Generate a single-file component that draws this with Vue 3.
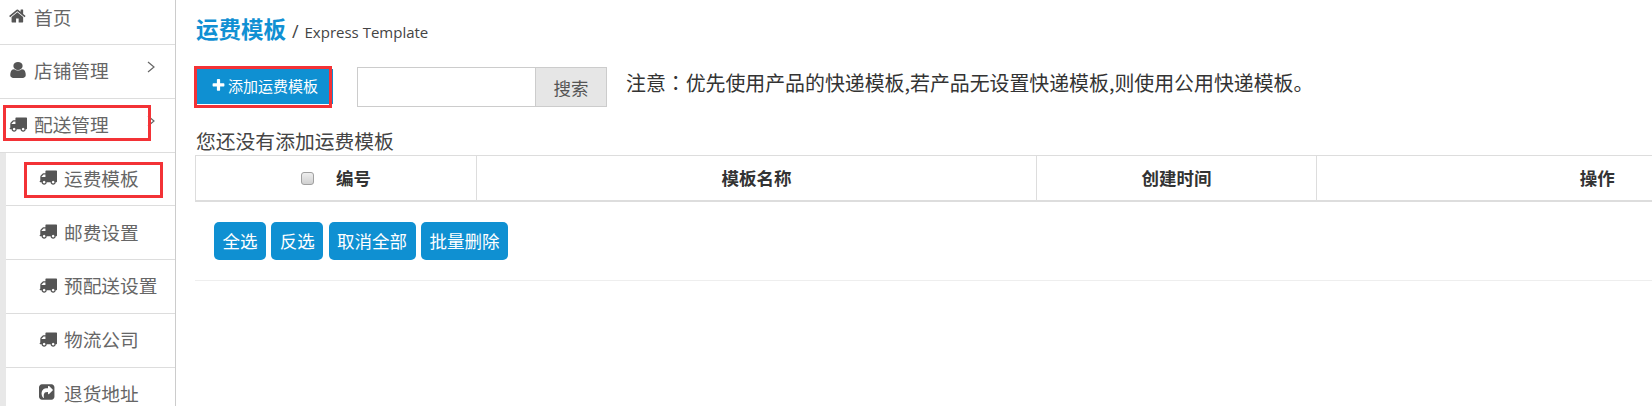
<script setup>
const icons = {
  home: 'M1408 992v480q0 26-19 45t-45 19h-384v-384h-256v384h-384q-26 0-45-19t-19-45v-480q0-1 .5-3t.5-3l575-474 575 474q1 2 1 6zm223-69l-62 74q-8 9-21 11h-3q-13 0-21-7l-692-577-692 577q-12 8-24 7-13-2-21-11l-62-74q-8-10-7-23.500t11-21.500l719-599q32-26 76-26t76 26l244 204v-195q0-14 9-23t23-9h192q14 0 23 9t9 23v408l219 182q10 8 11 21.500t-7 23.500z',
  user: 'M1536 1399q0 109-62.500 187t-150.500 78h-854q-88 0-150.500-78t-62.500-187q0-85 8.500-160.500t31.500-152 58.500-131 94-89 134.500-34.500q131 128 313 128t313-128q76 0 134.500 34.500t94 89 58.500 131 31.500 152 8.500 160.500zm-256-887q0 159-112.500 271.500t-271.500 112.500-271.500-112.500-112.500-271.500 112.500-271.500 271.500-112.500 271.500 112.500 112.500 271.500z',
  truck: 'M640 1408q0-52-38-90t-90-38-90 38-38 90 38 90 90 38 90-38 38-90zm-384-512h384v-256h-158q-13 0-22 9l-195 195q-9 9-9 22v30zm1280 512q0-52-38-90t-90-38-90 38-38 90 38 90 90 38 90-38 38-90zm256-1088v1024q0 15-4 26.500t-13.500 18.500-16.500 11.500-23.500 6-22.500 2-25.500 0-22.500-.5q0 106-75 181t-181 75-181-75-75-181h-384q0 106-75 181t-181 75-181-75-75-181h-64q-3 0-22.500.5t-25.500 0-22.500-2-23.500-6-16.500-11.500-13.500-18.500-4-26.500q0-26 19-45t45-19v-320q0-8-.5-35t0-38 2.500-34.500 6.500-37 14-30.500 22.500-30l198-198q19-19 50.500-32t58.500-13h160v-192q0-26 19-45t45-19h1024q26 0 45 19t19 45z',
  share: 'M1005 1101l352-352q19-19 19-45t-19-45l-352-352q-30-31-69-14-40 17-40 59v160q-119 0-216 19.500t-162.500 51-114 79-76.500 95.500-44.500 109-21.500 111.500-5 110.500q0 181 167 404 11 12 25 12 7 0 13-3 22-9 19-33-44-354 62-473 46-52 130-75.500t224-23.500v160q0 42 40 59 12 5 24 5 26 0 45-19zm531-685v960q0 119-84.500 203.500t-203.500 84.500h-960q-119 0-203.500-84.500t-84.500-203.500v-960q0-119 84.500-203.500t203.500-84.500h960q119 0 203.500 84.500t84.500 203.500z',
  plus: 'M1600 736v192q0 40-28 68t-68 28h-416v416q0 40-28 68t-68 28h-192q-40 0-68-28t-28-68v-416h-416q-40 0-68-28t-28-68v-192q0-40 28-68t68-28h416v-416q0-40 28-68t68-28h192q40 0 68 28t28 68v416h416q40 0 68 28t28 68z',
}

// the user glyph sits wider in the reference than its usual proportions
const boxes = { user: '150 40 1492 1728' }

const topItems = [
  { label: '首页', icon: 'home' },
  { label: '店铺管理', icon: 'user', arrow: true },
  { label: '配送管理', icon: 'truck', arrow: true, marked: true },
]

const subItems = [
  { label: '运费模板', icon: 'truck', marked: true },
  { label: '邮费设置', icon: 'truck' },
  { label: '预配送设置', icon: 'truck' },
  { label: '物流公司', icon: 'truck' },
  { label: '退货地址', icon: 'share' },
]

const actions = ['全选', '反选', '取消全部', '批量删除']
</script>

<template>
  <div class="page">
    <aside class="sidebar">
      <ul class="menu">
        <li v-for="item in topItems" :key="item.label" class="menu-item">
          <svg class="icon" :viewBox="boxes[item.icon] || '0 0 1792 1792'" preserveAspectRatio="none"><path :d="icons[item.icon]" /></svg>
          <span>{{ item.label }}</span>
          <svg v-if="item.arrow" class="arrow" viewBox="0 0 8 12"><path d="M1 1l6 5-6 5" /></svg>
          <i v-if="item.marked" class="mark mark-top"></i>
        </li>
      </ul>
      <ul class="submenu">
        <li v-for="item in subItems" :key="item.label" class="menu-item sub-item">
          <svg class="icon" viewBox="0 0 1792 1792"><path :d="icons[item.icon]" /></svg>
          <span>{{ item.label }}</span>
          <i v-if="item.marked" class="mark mark-sub"></i>
        </li>
      </ul>
    </aside>

    <main class="main">
      <h1 class="heading">
        <span class="heading-title">运费模板</span>
        <span class="heading-sub"><span class="slash">/</span> Express Template</span>
      </h1>

      <div class="toolbar">
        <div class="add-wrap">
          <button class="add-btn" type="button">
            <svg viewBox="0 0 1792 1792"><path :d="icons.plus" /></svg>
            添加运费模板
          </button>
          <i class="mark mark-add"></i>
        </div>
        <div class="search">
          <input class="search-input" type="text" />
          <button class="search-btn" type="button">搜索</button>
        </div>
        <p class="note">注意<span class="colon">：</span>优先使用产品的快递模板,若产品无设置快递模板,则使用公用快递模板。</p>
      </div>

      <p class="empty">您还没有添加运费模板</p>

      <table class="grid">
        <colgroup>
          <col class="col-a" />
          <col class="col-b" />
          <col class="col-c" />
          <col class="col-d" />
        </colgroup>
        <thead>
          <tr>
            <th><input class="check" type="checkbox" />编号</th>
            <th>模板名称</th>
            <th>创建时间</th>
            <th>操作</th>
          </tr>
        </thead>
      </table>

      <div class="actions">
        <button v-for="label in actions" :key="label" class="action-btn" type="button">{{ label }}</button>
      </div>
    </main>
  </div>
</template>

<style>
html,
body {
  margin: 0;
  overflow: hidden;
  background: #fff;
}
</style>

<style scoped>
.page {
  display: flex;
  width: 1652px;
  height: 406px;
  overflow: hidden;
  font-family: "Noto Sans CJK SC", "Liberation Sans", sans-serif;
  color: #333;
}

.sidebar {
  flex: none;
  width: 175px;
  border-right: 1px solid #ccc;
}

.menu,
.submenu {
  list-style: none;
  margin: 0;
  padding: 0;
}

.menu {
  margin-top: -8.75px;
}

.submenu {
  border-left: 6px solid #e8e8e8;
}

.menu-item {
  position: relative;
  display: flex;
  align-items: center;
  box-sizing: border-box;
  height: 53.75px;
  padding: 0 0 3px 9px;
  border-bottom: 1px solid #ddd;
  font-size: 18.7px;
  color: #666;
}

.sub-item {
  padding-left: 33px;
}

.icon {
  flex: none;
  width: 18px;
  height: 18px;
  margin-right: 7px;
  fill: #555;
}

.arrow {
  position: absolute;
  right: 20px;
  top: 16px;
  width: 8px;
  height: 12px;
  fill: none;
  stroke: #666;
  stroke-width: 1.2;
}

.mark {
  position: absolute;
  box-sizing: border-box;
  border: 3px solid #f33236;
  pointer-events: none;
}

.mark-top {
  left: 3px;
  top: 6px;
  width: 148px;
  height: 36px;
}

.mark-sub {
  left: 18px;
  top: 9px;
  width: 139px;
  height: 36px;
}

.mark-add {
  left: -3px;
  top: -3px;
  width: 138px;
  height: 42px;
}

.main {
  flex: 1;
  min-width: 0;
  padding-left: 19px;
  overflow: hidden;
}

.heading {
  display: flex;
  align-items: baseline;
  gap: 6px;
  height: 36px;
  margin: 10px 0 0 1px;
  font-weight: 400;
  line-height: 36px;
}

.heading-title {
  font-size: 22.5px;
  font-weight: 700;
  color: #1090d3;
}

.heading-sub {
  margin-top: -1px;
  font-family: "Open Sans", sans-serif;
  font-size: 15px;
  color: #444;
}

.slash {
  margin-right: 2px;
  font-size: 18px;
}

.toolbar {
  display: flex;
  align-items: flex-start;
  margin: 23px 0 0 2px;
}

.add-wrap {
  position: relative;
  flex: none;
}

.add-btn {
  display: flex;
  align-items: center;
  justify-content: center;
  gap: 2px;
  width: 136px;
  height: 35px;
  padding: 0 1px 2px 0;
  border: 0;
  background: #0f90d2;
  color: #fff;
  font: inherit;
  font-size: 15px;
}

.add-btn svg {
  width: 15px;
  height: 15px;
  fill: #fff;
}

.search {
  display: flex;
  flex: none;
  width: 250px;
  height: 40px;
  margin: -2px 0 0 24px;
}

.search-input {
  flex: 1;
  min-width: 0;
  box-sizing: border-box;
  border: 1px solid #ccc;
  border-right: 0;
  background: #fff;
  padding: 0;
}

.search-btn {
  flex: none;
  width: 72px;
  padding: 1px 0 0;
  border: 1px solid #ccc;
  background: #e6e6e6;
  color: #555;
  font: inherit;
  font-size: 17.5px;
}

.note {
  margin: -1px 0 0 19px;
  font-size: 19.9px;
  line-height: 30px;
  white-space: nowrap;
}

.colon {
  font-family: "Noto Sans CJK TC", sans-serif;
}

.empty {
  margin: 19px 0 0 1px;
  font-size: 19.8px;
  line-height: 29px;
  color: #444;
}

.grid {
  width: 1682px;
  margin: 0;
  table-layout: fixed;
  border-collapse: collapse;
  border-top: 1px solid #ddd;
  border-bottom: 2px solid #ddd;
}

.col-a {
  width: 281px;
}

.col-b {
  width: 560px;
}

.col-c {
  width: 280px;
}

.col-d {
  width: 561px;
}

.grid th {
  box-sizing: border-box;
  height: 45px;
  padding: 0;
  border-left: 1px solid #ddd;
  font-size: 17.5px;
  font-weight: 700;
  color: #333;
  text-align: center;
}

.check {
  appearance: none;
  box-sizing: border-box;
  width: 13px;
  height: 13px;
  margin: 0 22px 4px 0;
  border: 1px solid #a0a0a0;
  border-radius: 3px;
  background: linear-gradient(#eee, #d0d0d0);
  vertical-align: middle;
}

.actions {
  display: flex;
  height: 58px;
  padding: 20px 0 0 19px;
  gap: 5.3px;
  border-bottom: 1px solid #eee;
}

.action-btn {
  height: 38px;
  padding: 0 8.5px;
  border: 0;
  border-radius: 5px;
  background: #0f90d2;
  color: #fff;
  font: inherit;
  font-size: 17.5px;
}
</style>
